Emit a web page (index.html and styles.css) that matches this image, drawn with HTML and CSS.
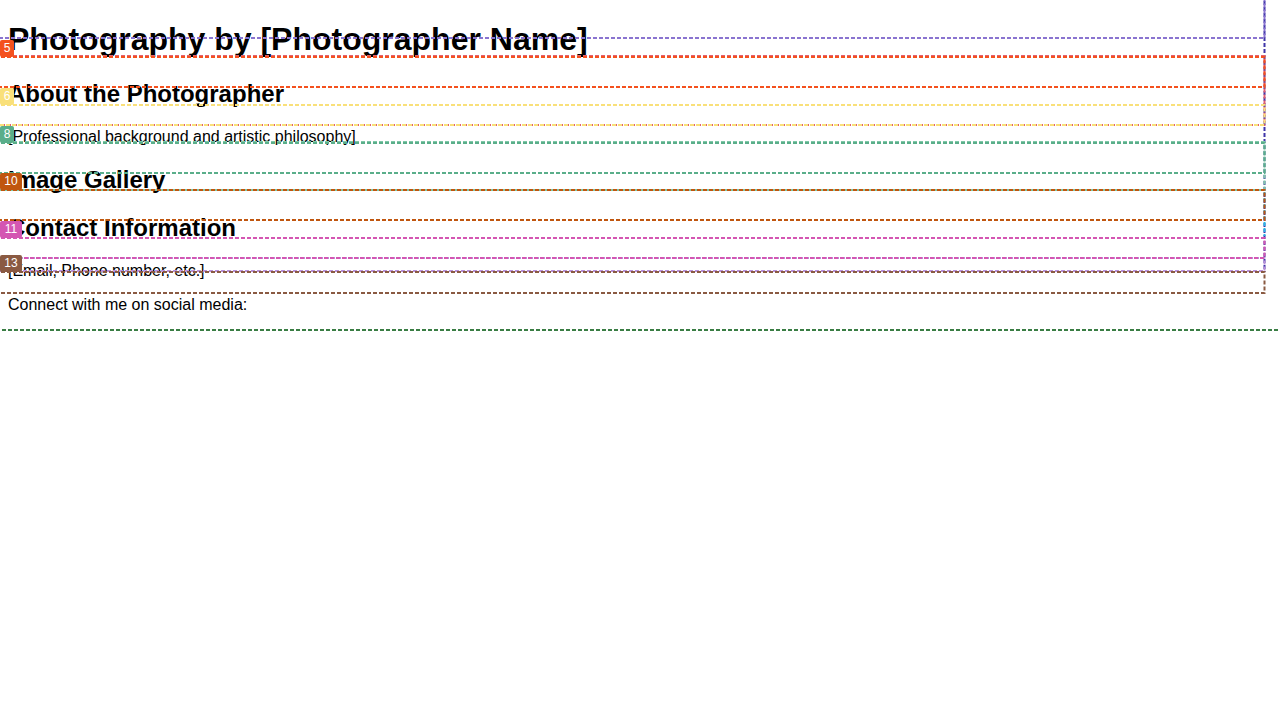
FILE: index.html
```html
<!DOCTYPE html>
<html lang="en">
<head>
<meta charset="utf-8">
<title>Photography by [Photographer Name]</title>
<link rel="stylesheet" href="styles.css">
</head>
<body>
<header class="site-header">
  <h1 class="title">Photography by [Photographer Name]</h1>
</header>
<section class="about">
  <h2 class="heading">About the Photographer</h2>
  <p class="text">[Professional background and artistic philosophy]</p>
</section>
<section class="gallery">
  <h2 class="heading">Image Gallery</h2>
  <div class="gallery-grid"></div>
</section>
<section class="contact">
  <h2 class="heading">Contact Information</h2>
  <p class="text">[Email, Phone number, etc.]</p>
  <p class="text">Connect with me on social media:</p>
</section>

<div class="overlay">
  <svg class="boxes" width="1280" height="720" viewBox="0 0 1280 720">
    <rect x="-5" y="-5" width="1296" height="335" stroke="#3a7d44"/>
    <path d="M1264.5 -5 V272" stroke="#3f35a8"/>
    <path d="M1264.5 192 V236" stroke="#29b6e6"/>
    <rect x="-5" y="-5" width="1269.5" height="43" stroke="#8a74d0"/>
    <rect x="-5" y="56" width="1269.5" height="69" stroke="#e26070"/>
    <rect x="-5" y="57" width="1269.5" height="30" stroke="#f4511e"/>
    <rect x="-5" y="105" width="1269.5" height="20" stroke="#f9e07a"/>
    <rect x="-5" y="142" width="1269.5" height="48" stroke="#7fc8a8"/>
    <rect x="-5" y="143" width="1269.5" height="30" stroke="#5aae8a"/>
    <rect x="-5" y="190" width="1269.5" height="30" stroke="#c0560f"/>
    <rect x="-5" y="258" width="1269.5" height="13" stroke="#b890d8"/>
    <rect x="-5" y="238" width="1269.5" height="20" stroke="#d456b2"/>
    <rect x="-5" y="272" width="1269.5" height="21" stroke="#8a5a42"/>
  </svg>
  <span class="badge b5">5</span>
  <span class="badge b6">6</span>
  <span class="badge b8">8</span>
  <span class="badge b10">10</span>
  <span class="badge b11">11</span>
  <span class="badge b13">13</span>
</div>
</body>
</html>
```

FILE: styles.css
```css
html, body {
  background: #ffffff;
}
body {
  margin: 0 8px;
  font-family: "Liberation Sans", Arial, Helvetica, sans-serif;
  color: #000000;
}
.title {
  font-size: 32px;
  font-weight: bold;
  margin: 21.44px 0;
}
.heading {
  font-size: 24px;
  font-weight: bold;
  margin: 19.92px 0;
}
.text {
  font-size: 16px;
  margin: 16px 0;
}
.overlay {
  position: absolute;
  top: 0;
  left: 0;
  width: 1280px;
  height: 720px;
  pointer-events: none;
}
.boxes {
  position: absolute;
  top: 0;
  left: 0;
}
.boxes rect,
.boxes path {
  fill: none;
  stroke-width: 2;
  stroke-dasharray: 4 2;
}
.badge {
  position: absolute;
  left: 0;
  height: 17px;
  min-width: 14px;
  padding: 0 3px;
  box-sizing: border-box;
  border-radius: 2px;
  color: #ffffff;
  font-family: "Liberation Sans", Arial, sans-serif;
  font-size: 12px;
  line-height: 17px;
  text-align: center;
}
.b5 { top: 40px; background: #f4511e; }
.b6 { top: 88px; background: #f9e07a; }
.b8 { top: 126px; background: #5aae8a; }
.b10 { top: 173px; background: #c0560f; width: 22px; }
.b11 { top: 221px; background: #d456b2; width: 22px; }
.b13 { top: 255px; background: #8a5a42; width: 22px; }
```
